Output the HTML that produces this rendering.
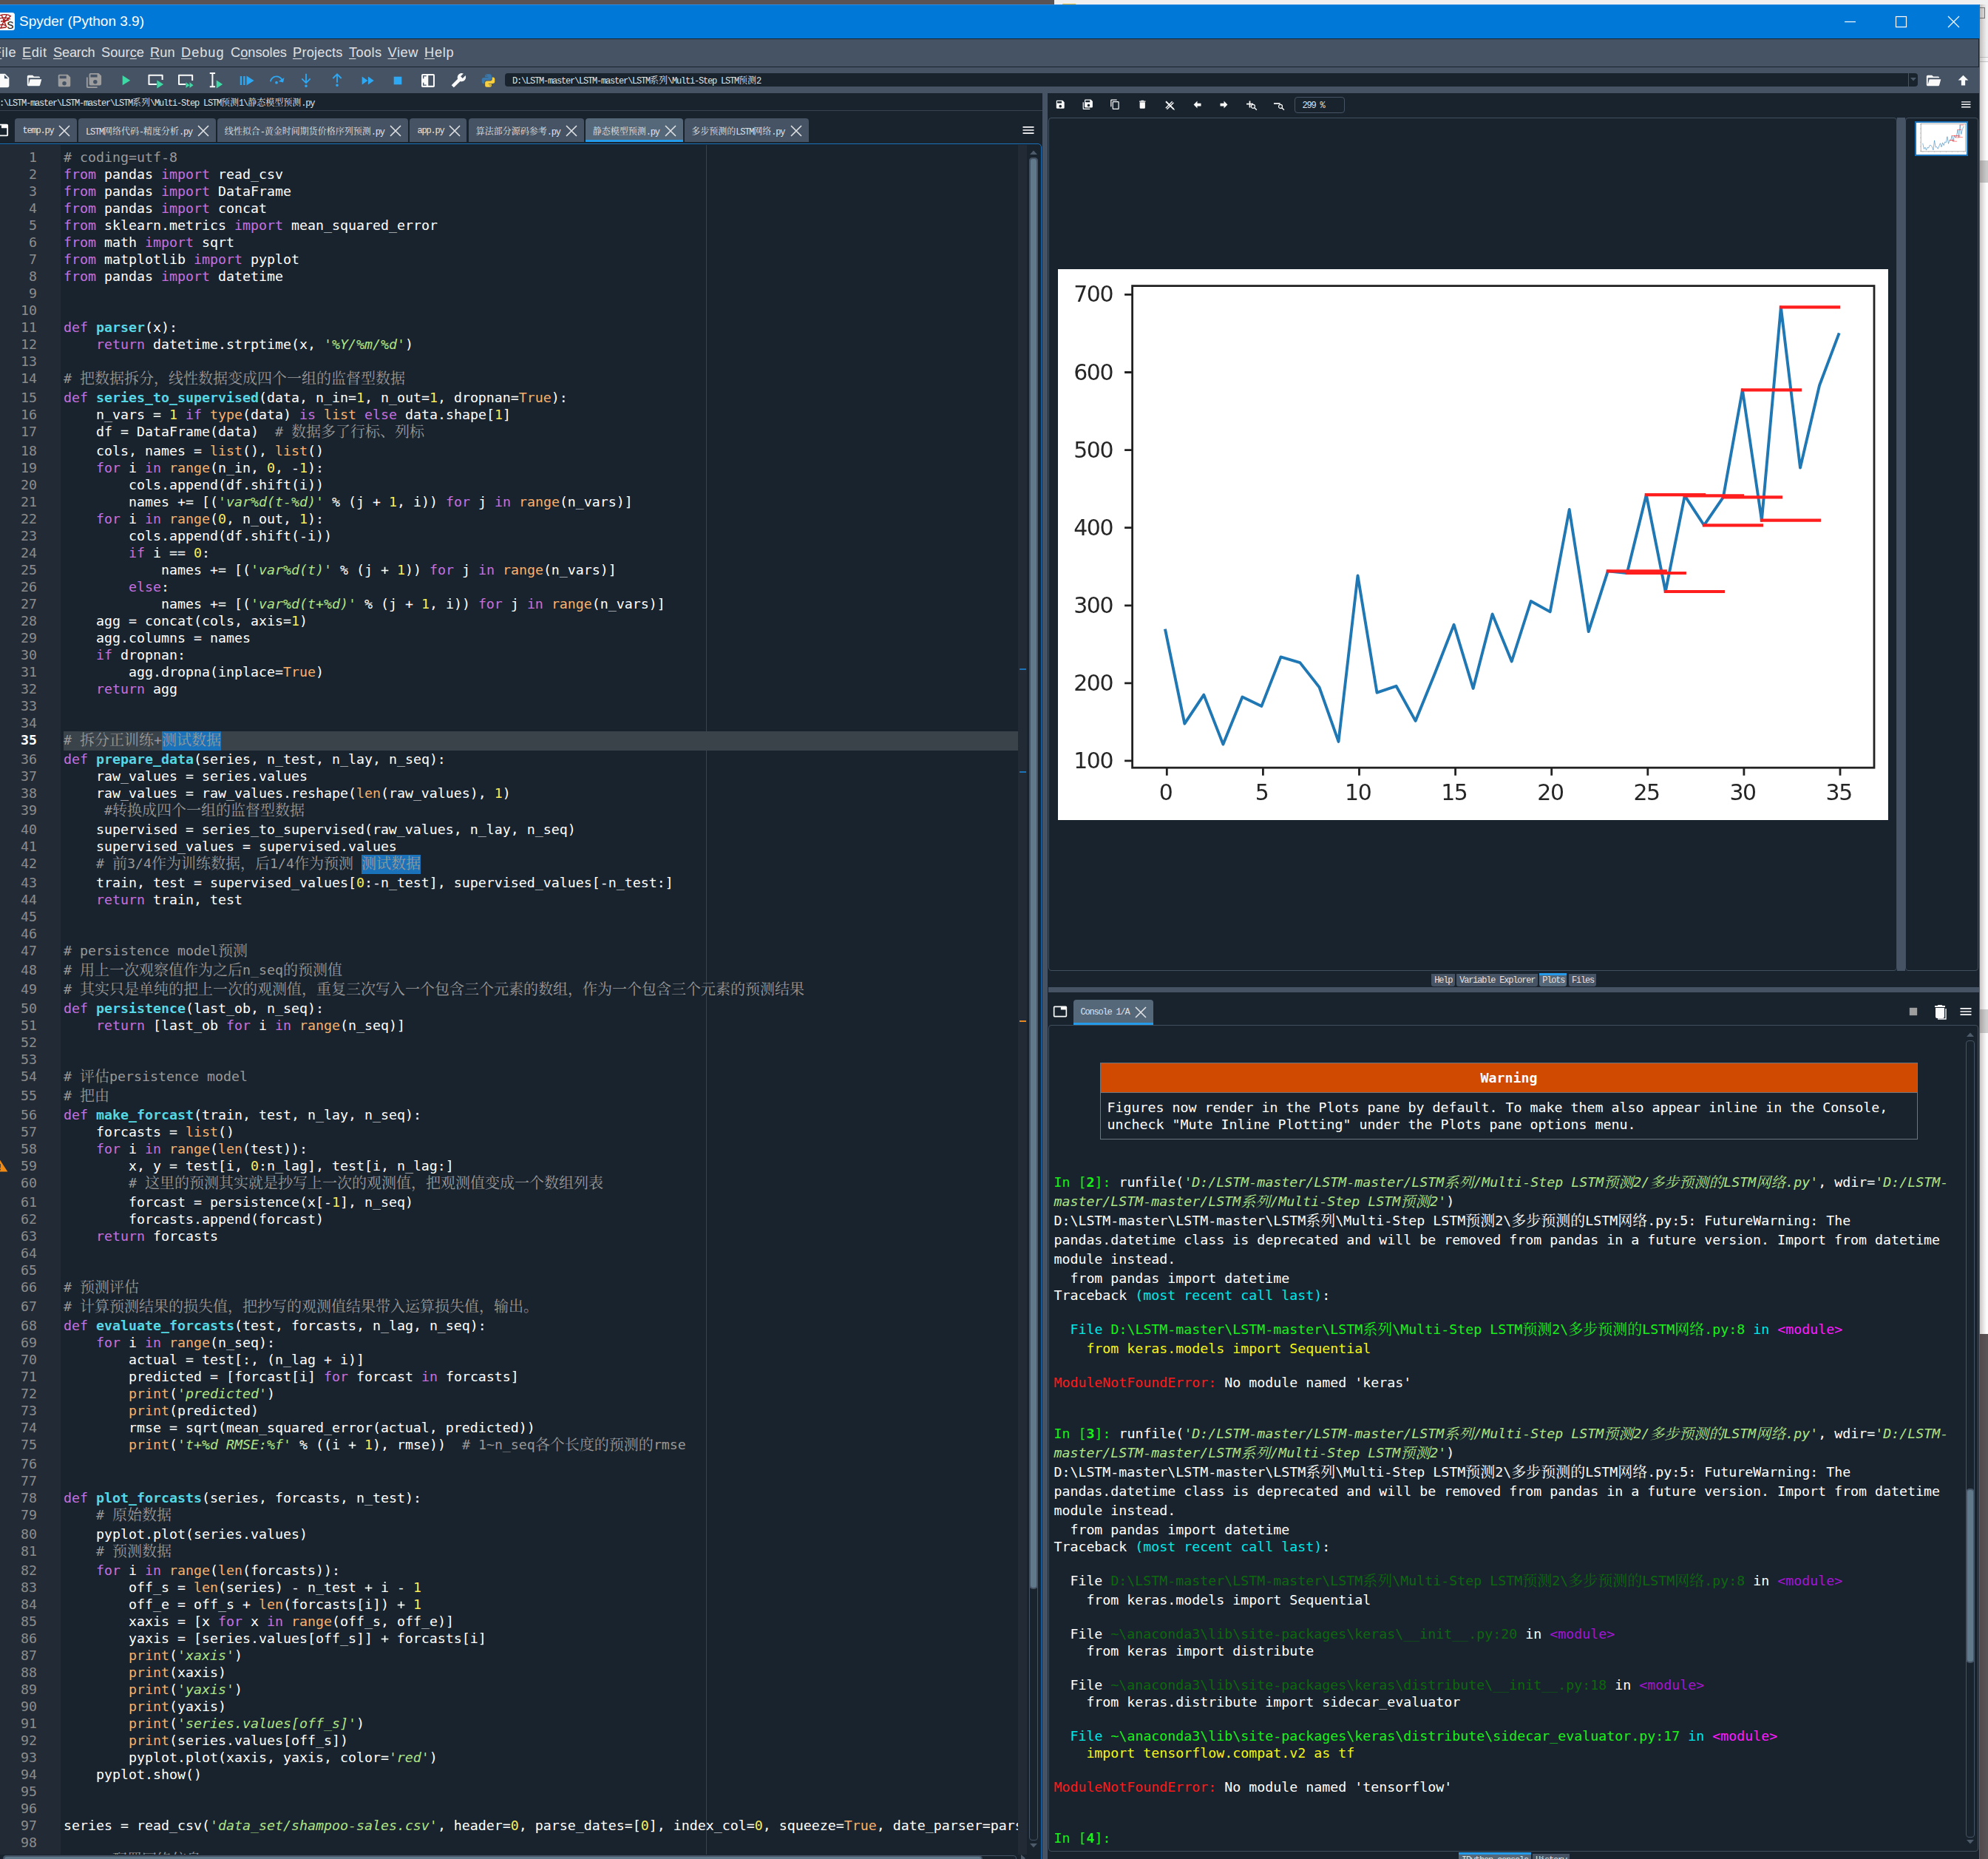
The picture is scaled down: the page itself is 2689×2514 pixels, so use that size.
<!DOCTYPE html>
<html lang="zh"><head><meta charset="utf-8"><title>Spyder (Python 3.9)</title>
<style>
html,body{margin:0;padding:0}
body{width:2689px;height:2514px;overflow:hidden;position:relative;background:#fdfdfd;
 font-family:"Liberation Sans","Noto Sans CJK SC",sans-serif;}
.abs,.ic{position:absolute}
.ic{display:block;overflow:visible}
#win{position:absolute;left:0;top:6px;width:2678px;height:2508px;background:#19232d;overflow:hidden}
#win>.o{position:absolute;left:0;top:-6px;width:2678px;height:2514px}
#title{position:absolute;left:0;top:6px;width:2678px;height:46px;background:#0078d7;box-shadow:inset 0 1px 0 #2b8ce0}
#title .t{position:absolute;left:26px;top:11px;font-size:19px;line-height:24px;color:#fff;white-space:pre}
#menubar{position:absolute;left:0;top:52px;width:2676px;height:37px;background:#455364;border-top:1px solid #19232d;border-bottom:1px solid #19232d;border-right:1px solid #19232d;box-sizing:content-box}
#menubar span{position:absolute;top:5px;font-size:18.2px;line-height:26px;color:#e0e1e3;white-space:pre}
#menubar u{text-decoration-thickness:1px;text-underline-offset:2px}
#toolbar{position:absolute;left:0;top:91px;width:2678px;height:35px;background:#455364}
.small{font-family:"Liberation Mono","Noto Serif CJK SC",monospace;font-size:12px;letter-spacing:-1.2px;line-height:14px;color:#e0e1e3;white-space:pre}
.small b{font-weight:normal;font-size:12px;letter-spacing:0;font-family:"Noto Serif CJK SC",serif}
.mono{font-family:"DejaVu Sans Mono","Noto Serif CJK SC",monospace;font-size:18.27px;white-space:pre}
.mono .z{font-family:"Noto Serif CJK SC",serif;font-size:20px;line-height:20px;position:relative;top:1px}

#code{position:absolute;left:0;top:201px;width:1377px;height:2307px;overflow:hidden;color:#fff;white-space:normal}
#code .l{position:relative;height:23px;line-height:23px;white-space:pre}
#code .l.h{height:26px}
#code .l.cur{background:linear-gradient(90deg,transparent 86px,#3a424a 86px)}
#code .ln{position:absolute;left:0;top:0;width:50px;text-align:right;color:#8c8c8c}
#code .cur .ln{color:#fff;font-weight:bold}
#code .tx{position:absolute;left:86px;top:0;white-space:pre}
.k{color:#c670e0}.b{color:#fab16c}.d{color:#57d6e4;font-weight:bold}.c{color:#999}.s{color:#b0e686;font-style:italic}.n{color:#faed5c}
.occ{background:#1a72bb;display:inline-block;height:26px;vertical-align:top}


.cl{position:absolute;left:1425.4px;height:23px;line-height:23px;color:#fff;white-space:pre}
.cg{color:#19f219}.cc{color:#00e8e8}.cm{color:#ff19ff}.cy{color:#f5f51a}.cr{color:#ff1a1a}.cdg{color:#0d680d}.cdm{color:#a314d1}
.cs{color:#b0e686;font-style:italic}

</style></head><body>
<div class="abs" style="left:0;top:0;width:1426px;height:7px;background:#5a5356"></div>
<div class="abs" style="left:1426px;top:0;width:1263px;height:7px;background:#f0f0f0"></div>
<div class="abs" style="left:1437px;top:5px;width:18px;height:2px;background:#e3b933"></div>
<div class="abs" style="left:2678px;top:6px;width:11px;height:72px;background:#f0f0f0"></div>
<div class="abs" style="left:2678px;top:77px;width:11px;height:7px;background:#f6f6f6;border-top:1px solid #c9c9c9;border-bottom:1px solid #c9c9c9;box-sizing:border-box"></div>
<div class="abs" style="left:2677px;top:10px;width:8px;height:15px;border:1px solid #7a7a7a;box-sizing:border-box;background:#e6e6e6"></div>
<div class="abs" style="left:2678px;top:217px;width:11px;height:30px;background:#c9c9c9"></div>
<div class="abs" style="left:2678px;top:1365px;width:11px;height:32px;background:#cfcfcf"></div>
<div class="abs" style="left:2678px;top:1804px;width:11px;height:710px;background:#5a5457"></div>
<div class="abs" style="left:2678px;top:6px;width:9px;height:2508px;background:linear-gradient(90deg,rgba(60,40,40,.25),rgba(60,40,40,0))"></div>
<div id="win"><div class="o">

<div id="title">
<svg class="ic" style="left:-8px;top:11px" width="28" height="24" viewBox="0 0 28 24"><rect x="0" y="0" width="28" height="24" rx="3.5" fill="#fafafa"/><g stroke="#a31515" stroke-width="1.3" fill="none"><path d="M8,4 Q16,1 23,5 M8,8 Q15,5.5 22,9 M9,12 L20,10 M8,17 Q12,15 16,18 M8,21 L16,20"/><path d="M10,3 L17,20 M17,3 L9,21 M22,5 L14,13"/></g><text x="17.6" y="21.6" font-family="Liberation Sans,sans-serif" font-size="18" fill="#2b2b2b">s</text></svg>
<div class="t">Spyder (Python 3.9)</div>
<svg class="ic" style="left:2480px;top:0" width="190" height="46" viewBox="0 0 190 46" fill="none" stroke="#fff" stroke-width="1.2"><path d="M15,23.5H30"/><rect x="84.5" y="16.5" width="14" height="14"/><path d="M155,16L170,31M170,16L155,31"/></svg>
</div>
<div id="menubar">
<span style="left:-9.3px;letter-spacing:0.50px"><u>F</u>ile</span>
<span style="left:30.0px;letter-spacing:0.53px"><u>E</u>dit</span>
<span style="left:72.0px;letter-spacing:-0.19px"><u>S</u>earch</span>
<span style="left:137.0px;letter-spacing:0.06px">Sour<u>c</u>e</span>
<span style="left:203.0px;letter-spacing:0.07px"><u>R</u>un</span>
<span style="left:245.0px;letter-spacing:0.98px"><u>D</u>ebug</span>
<span style="left:312.0px;letter-spacing:0.00px">C<u>o</u>nsoles</span>
<span style="left:396.0px;letter-spacing:0.25px"><u>P</u>rojects</span>
<span style="left:472.0px;letter-spacing:0.40px"><u>T</u>ools</span>
<span style="left:524.5px;letter-spacing:0.57px"><u>V</u>iew</span>
<span style="left:574.0px;letter-spacing:0.75px"><u>H</u>elp</span>
</div>
<div id="toolbar">
<svg class="ic" style="left:-6.5px;top:6.5px" width="22" height="22" viewBox="0 0 24 24" ><path d="M13,9V3.5L18.5,9M6,2C4.89,2 4,2.89 4,4V20A2,2 0 0,0 6,22H18A2,2 0 0,0 20,20V8L14,2H6Z" fill="#fafafa"/></svg>
<svg class="ic" style="left:35.0px;top:6.5px" width="22" height="22" viewBox="0 0 24 24" ><path d="M19,20H4C2.89,20 2,19.1 2,18V6C2,4.89 2.89,4 4,4H10L12,6H19A2,2 0 0,1 21,8H21L4,8V18L6.14,10H23.21L20.93,18.5C20.7,19.37 19.92,20 19,20Z" fill="#fafafa"/></svg>
<svg class="ic" style="left:75.5px;top:6.5px" width="22" height="22" viewBox="0 0 24 24" ><path d="M15,9H5V5H15M12,19A3,3 0 0,1 9,16A3,3 0 0,1 12,13A3,3 0 0,1 15,16A3,3 0 0,1 12,19M17,3H5C3.89,3 3,3.9 3,5V19A2,2 0 0,0 5,21H19A2,2 0 0,0 21,19V7L17,3Z" fill="#9e9e9e"/></svg>
<svg class="ic" style="left:116.0px;top:6.5px" width="22" height="22" viewBox="0 0 24 24" ><path d="M17,7V3H7V7H17M14,17A3,3 0 0,0 17,14A3,3 0 0,0 14,11A3,3 0 0,0 11,14A3,3 0 0,0 14,17M19,1L23,5V17A2,2 0 0,1 21,19H7C5.89,19 5,18.1 5,17V3A2,2 0 0,1 7,1H19M1,7H3V21H17V23H3A2,2 0 0,1 1,21V7Z" fill="#9e9e9e"/></svg>
<svg class="ic" style="left:158.0px;top:6.0px" width="23" height="23" viewBox="0 0 24 24" ><path d="M8,5.14V19.14L19,12.14L8,5.14Z" fill="#3ed9a4"/></svg>
<svg class="ic" style="left:199.5px;top:6.5px" width="22" height="22" viewBox="0 0 24 24" ><path d="M13,17.5H1.6V4.2H21.4V11" fill="none" stroke="#fafafa" stroke-width="2.2" stroke-linejoin="round"/><path d="M13.5,11.5V23.5L23,17.5Z" fill="#3ed9a4"/></svg>
<svg class="ic" style="left:240.0px;top:6.5px" width="22" height="22" viewBox="0 0 24 24" ><path d="M12,17.5H2.2V4.2H22V12" fill="none" stroke="#fafafa" stroke-width="2.2" stroke-linejoin="round"/><path d="M12.5,14.5V23L18,18.75ZM18,14.5V23L23.5,18.75Z" fill="#3ed9a4"/></svg>
<svg class="ic" style="left:281.0px;top:6.5px" width="22" height="22" viewBox="0 0 24 24" ><path d="M3,1.2H11M3,21H11M7,1.2V21" fill="none" stroke="#fafafa" stroke-width="2.2"/><path d="M12.8,11.5V23.5L22,17.5Z" fill="#3ed9a4"/></svg>
<svg class="ic" style="left:321.5px;top:6.5px" width="22" height="22" viewBox="0 0 24 24" ><path d="M3,5.5H5.6V18.5H3ZM7.8,5.5H10.4V18.5H7.8ZM12.5,5V19L23.5,12Z" fill="#2fa8f4"/></svg>
<svg class="ic" style="left:363.0px;top:6.0px" width="22" height="22" viewBox="0 0 24 24" ><path d="M12,14A2,2 0 0,1 14,16A2,2 0 0,1 12,18A2,2 0 0,1 10,16A2,2 0 0,1 12,14M23.46,8.86L21.87,15.75L15,14.16L18.8,11.78C17.39,9.5 14.87,8 12,8C8.05,8 4.77,10.86 4.12,14.63L2.15,14.28C2.96,9.58 7.06,6 12,6C15.58,6 18.73,7.89 20.5,10.72L23.46,8.86Z" fill="#2fa8f4"/></svg>
<svg class="ic" style="left:403.3px;top:6.5px" width="22" height="22" viewBox="0 0 24 24" ><path d="M12,22A2,2 0 0,1 10,20A2,2 0 0,1 12,18A2,2 0 0,1 14,20A2,2 0 0,1 12,22M13,2V13L17.5,8.5L18.92,9.92L12,16.84L5.08,9.92L6.5,8.5L11,13V2H13Z" fill="#2fa8f4"/></svg>
<svg class="ic" style="left:444.6px;top:6.2px" width="22" height="22" viewBox="0 0 24 24" ><path d="M12,22A2,2 0 0,1 10,20A2,2 0 0,1 12,18A2,2 0 0,1 14,20A2,2 0 0,1 12,22M13,16H11V6L6.5,10.5L5.08,9.08L12,2.16L18.92,9.08L17.5,10.5L13,6V16Z" fill="#2fa8f4"/></svg>
<svg class="ic" style="left:485.5px;top:6.5px" width="22" height="22" viewBox="0 0 24 24" ><path d="M13,6V18L21.5,12M4,18L12.5,12L4,6V18Z" fill="#2fa8f4"/></svg>
<svg class="ic" style="left:526.5px;top:6.5px" width="22" height="22" viewBox="0 0 24 24" ><path d="M6.2,6.2H17.8V17.8H6.2Z" fill="#2fa8f4"/></svg>
<svg class="ic" style="left:568.0px;top:6.5px" width="22" height="22" viewBox="0 0 24 24" ><rect x="2.2" y="2.2" width="19.6" height="19.6" rx="2" fill="#fafafa"/><path d="M12.3,4.4H19.6V19.4H12.3Z" fill="#455364"/><path d="M9.4,5.1H5.1V8.9M5.1,14.9V18.7H9.4" fill="none" stroke="#455364" stroke-width="1.5"/></svg>
<svg class="ic" style="left:609.5px;top:7.0px" width="21" height="21" viewBox="0 0 24 24" ><g transform="translate(24,0) scale(-1,1)"><path d="M22.7,19L13.6,9.9C14.5,7.6 14,4.9 12.1,3C10.1,1 7.1,0.6 4.7,1.7L9,6L6,9L1.6,4.7C0.4,7.1 0.9,10.1 2.9,12.1C4.8,14 7.5,14.5 9.8,13.6L18.9,22.7C19.3,23.1 19.9,23.1 20.3,22.7L22.6,20.4C23.1,20 23.1,19.3 22.7,19Z" fill="#fafafa"/></g></svg>
<svg class="ic" style="left:650.0px;top:7.3px" width="21" height="21" viewBox="0 0 24 24" ><path d="M4.86,17.5C3.28,17.5 2,16.22 2,14.64V10.86C2,9.28 3.28,8 4.86,8H12C12,7.61 11.68,7.04 11.29,7.04H7V5.36C7,3.78 8.28,2.5 9.86,2.5H14.14C15.72,2.5 17,3.78 17,5.36V9.11C17,10.69 15.72,11.96 14.14,11.96H8.89C7.31,11.96 6.04,13.24 6.04,14.82V17.5H4.86M9.14,5.71C9.54,5.71 9.86,5.41 9.86,4.82C9.86,4.23 9.54,4.11 9.14,4.11C8.75,4.11 8.43,4.43 8.43,4.82C8.43,5.21 8.75,5.71 9.14,5.71Z" fill="#3b79ad"/><path d="M19.14,7.5A2.86,2.86 0 0,1 22,10.36V14.14A2.86,2.86 0 0,1 19.14,17H12C12,17.39 12.32,17.96 12.71,17.96H17V19.64A2.86,2.86 0 0,1 14.14,22.5H9.86A2.86,2.86 0 0,1 7,19.64V15.89C7,14.31 8.28,13.04 9.86,13.04H15.11C16.69,13.04 17.96,11.76 17.96,10.18V7.5H19.14M14.86,19.29C14.46,19.29 14.14,19.59 14.14,20.18C14.14,20.77 14.46,20.89 14.86,20.89A0.71,0.71 0 0,0 15.57,20.18C15.57,19.79 15.25,19.29 14.86,19.29Z" fill="#f8cf3e"/></svg>
<div class="abs" style="left:683px;top:8px;width:1911px;height:18px;background:#19232d;border-radius:4px"></div>
<div class="abs" style="left:2581px;top:8px;width:1px;height:18px;background:#455364"></div>
<svg class="ic" style="left:2584px;top:14px" width="8" height="5" viewBox="0 0 8 5"><path d="M0,0H8L4,4.5Z" fill="#4b5a6a"/></svg>
<div class="abs small" style="left:693px;top:9.5px">D:\LSTM-master\LSTM-master\LSTM<b>系列</b>\Multi-Step LSTM<b>预测</b>2</div>
<svg class="ic" style="left:2604.0px;top:6.5px" width="22" height="22" viewBox="0 0 24 24" ><path d="M19,20H4C2.89,20 2,19.1 2,18V6C2,4.89 2.89,4 4,4H10L12,6H19A2,2 0 0,1 21,8H21L4,8V18L6.14,10H23.21L20.93,18.5C20.7,19.37 19.92,20 19,20Z" fill="#fafafa"/></svg>
<svg class="ic" style="left:2645.1px;top:6.8px" width="21" height="21" viewBox="0 0 24 24" ><path d="M15,20H9V12H4.16L12,4.16L19.84,12H15V20Z" fill="#fafafa"/></svg>
</div>
<div class="abs small" style="left:-1px;top:130.5px">:\LSTM-master\LSTM-master\LSTM<b>系列</b>\Multi-Step LSTM<b>预测</b>1\<b>静态模型预测</b>.py</div>
<div class="abs" style="left:0;top:149px;width:1410px;height:1px;background:#37414f"></div>
<svg class="ic" style="left:-10.5px;top:165.0px" width="22" height="22" viewBox="0 0 24 24" ><path d="M21,3H3A2,2 0 0,0 1,5V19A2,2 0 0,0 3,21H21A2,2 0 0,0 23,19V5A2,2 0 0,0 21,3M21,19H3V5H13V9H21V19Z" fill="#fafafa"/></svg>
<div class="abs" style="left:20.3px;top:160px;width:83.4px;height:32px;background:#455364;border-radius:4px 4px 0 0"></div>
<div class="abs small" style="left:30.4px;top:169.5px">temp.py</div>
<svg class="ic" style="left:79.3px;top:168.8px" width="16" height="16" viewBox="-8 -8 16 16"><path d="M-7,-7L7,7M7,-7L-7,7" stroke="#e0e1e3" stroke-width="1.6" fill="none"/></svg>
<div class="abs" style="left:106.0px;top:160px;width:185.5px;height:32px;background:#455364;border-radius:4px 4px 0 0"></div>
<div class="abs small" style="left:116.0px;top:169.5px">LSTM<b>网络代码</b>-<b>精度分析</b>.py</div>
<svg class="ic" style="left:267.0px;top:168.8px" width="16" height="16" viewBox="-8 -8 16 16"><path d="M-7,-7L7,7M7,-7L-7,7" stroke="#e0e1e3" stroke-width="1.6" fill="none"/></svg>
<div class="abs" style="left:294.0px;top:160px;width:257.5px;height:32px;background:#455364;border-radius:4px 4px 0 0"></div>
<div class="abs small" style="left:303.7px;top:169.5px"><b>线性拟合</b>-<b>黄金时间期货价格序列预测</b>.py</div>
<svg class="ic" style="left:526.6px;top:168.8px" width="16" height="16" viewBox="-8 -8 16 16"><path d="M-7,-7L7,7M7,-7L-7,7" stroke="#e0e1e3" stroke-width="1.6" fill="none"/></svg>
<div class="abs" style="left:554.0px;top:160px;width:77.3px;height:32px;background:#455364;border-radius:4px 4px 0 0"></div>
<div class="abs small" style="left:564.4px;top:169.5px">app.py</div>
<svg class="ic" style="left:607.0px;top:168.8px" width="16" height="16" viewBox="-8 -8 16 16"><path d="M-7,-7L7,7M7,-7L-7,7" stroke="#e0e1e3" stroke-width="1.6" fill="none"/></svg>
<div class="abs" style="left:633.8px;top:160px;width:156.2px;height:32px;background:#455364;border-radius:4px 4px 0 0"></div>
<div class="abs small" style="left:643.7px;top:169.5px"><b>算法部分源码参考</b>.py</div>
<svg class="ic" style="left:765.0px;top:168.8px" width="16" height="16" viewBox="-8 -8 16 16"><path d="M-7,-7L7,7M7,-7L-7,7" stroke="#e0e1e3" stroke-width="1.6" fill="none"/></svg>
<div class="abs" style="left:792.0px;top:160px;width:132.0px;height:32px;background:#54687a;border-radius:4px 4px 0 0"></div>
<div class="abs" style="left:792.0px;top:189px;width:132.0px;height:3px;background:#259ae9"></div>
<div class="abs small" style="left:801.7px;top:169.5px"><b>静态模型预测</b>.py</div>
<svg class="ic" style="left:898.7px;top:168.8px" width="16" height="16" viewBox="-8 -8 16 16"><path d="M-7,-7L7,7M7,-7L-7,7" stroke="#e0e1e3" stroke-width="1.6" fill="none"/></svg>
<div class="abs" style="left:926.0px;top:160px;width:168.0px;height:32px;background:#455364;border-radius:4px 4px 0 0"></div>
<div class="abs small" style="left:935.3px;top:169.5px"><b>多步预测的</b>LSTM<b>网络</b>.py</div>
<svg class="ic" style="left:1069.0px;top:168.8px" width="16" height="16" viewBox="-8 -8 16 16"><path d="M-7,-7L7,7M7,-7L-7,7" stroke="#e0e1e3" stroke-width="1.6" fill="none"/></svg>
<svg class="ic" style="left:1381.0px;top:166.0px" width="20" height="20" viewBox="0 0 24 24" ><path d="M3,6H21V8H3V6M3,11H21V13H3V11M3,16H21V18H3V16Z" fill="#fafafa"/></svg>
<div class="abs" style="left:-6px;top:194px;width:1415px;height:2330px;border:1px solid #1a72bb;border-radius:5px;box-sizing:border-box"></div>
<div class="abs" style="left:0;top:196px;width:82px;height:2312px;background:#222b35"></div>
<div class="abs" style="left:1377px;top:196px;width:12px;height:2312px;background:#222b35"></div>
<div class="abs" style="left:1379px;top:904px;width:9px;height:2px;background:#1a72bb"></div>
<div class="abs" style="left:1379px;top:1043px;width:9px;height:2px;background:#1a72bb"></div>
<div class="abs" style="left:1379px;top:1380px;width:9px;height:2px;background:#e8871e"></div>
<svg class="ic" style="left:1393px;top:203px" width="10" height="6" viewBox="0 0 10 6"><path d="M0,6L5,0.5L10,6Z" fill="#4d5b6a"/></svg>
<div class="abs" style="left:1392px;top:213px;width:12px;height:2276px;border:1px solid #455364;border-radius:4px;box-sizing:border-box"></div>
<div class="abs" style="left:1392px;top:213px;width:12px;height:1936px;background:#60798b;border:2px solid #455364;border-radius:5px;box-sizing:border-box"></div>
<svg class="ic" style="left:1393px;top:2493px" width="10" height="6" viewBox="0 0 10 6"><path d="M0,0L5,5.5L10,0Z" fill="#4d5b6a"/></svg>
<div class="abs" style="left:955px;top:196px;width:1px;height:2312px;background:#37414f"></div>

<div id="code" class="mono">
<div class="l"><span class="ln">1</span><span class="tx"><span class="c"># coding=utf-8</span></span></div>
<div class="l"><span class="ln">2</span><span class="tx"><span class="k">from</span> pandas <span class="k">import</span> read_csv</span></div>
<div class="l"><span class="ln">3</span><span class="tx"><span class="k">from</span> pandas <span class="k">import</span> DataFrame</span></div>
<div class="l"><span class="ln">4</span><span class="tx"><span class="k">from</span> pandas <span class="k">import</span> concat</span></div>
<div class="l"><span class="ln">5</span><span class="tx"><span class="k">from</span> sklearn.metrics <span class="k">import</span> mean_squared_error</span></div>
<div class="l"><span class="ln">6</span><span class="tx"><span class="k">from</span> math <span class="k">import</span> sqrt</span></div>
<div class="l"><span class="ln">7</span><span class="tx"><span class="k">from</span> matplotlib <span class="k">import</span> pyplot</span></div>
<div class="l"><span class="ln">8</span><span class="tx"><span class="k">from</span> pandas <span class="k">import</span> datetime</span></div>
<div class="l"><span class="ln">9</span><span class="tx"></span></div>
<div class="l"><span class="ln">10</span><span class="tx"></span></div>
<div class="l"><span class="ln">11</span><span class="tx"><span class="k">def</span> <span class="d">parser</span>(x):</span></div>
<div class="l"><span class="ln">12</span><span class="tx">    <span class="k">return</span> datetime.strptime(x, <span class="s">'%Y/%m/%d'</span>)</span></div>
<div class="l"><span class="ln">13</span><span class="tx"></span></div>
<div class="l h"><span class="ln">14</span><span class="tx"><span class="c"># <span class="z">把数据拆分，线性数据变成四个一组的监督型数据</span></span></span></div>
<div class="l"><span class="ln">15</span><span class="tx"><span class="k">def</span> <span class="d">series_to_supervised</span>(data, n_in=<span class="n">1</span>, n_out=<span class="n">1</span>, dropnan=<span class="b">True</span>):</span></div>
<div class="l"><span class="ln">16</span><span class="tx">    n_vars = <span class="n">1</span> <span class="k">if</span> <span class="b">type</span>(data) <span class="k">is</span> <span class="b">list</span> <span class="k">else</span> data.shape[<span class="n">1</span>]</span></div>
<div class="l h"><span class="ln">17</span><span class="tx">    df = DataFrame(data)  <span class="c"># <span class="z">数据多了行标、列标</span></span></span></div>
<div class="l"><span class="ln">18</span><span class="tx">    cols, names = <span class="b">list</span>(), <span class="b">list</span>()</span></div>
<div class="l"><span class="ln">19</span><span class="tx">    <span class="k">for</span> i <span class="k">in</span> <span class="b">range</span>(n_in, <span class="n">0</span>, -<span class="n">1</span>):</span></div>
<div class="l"><span class="ln">20</span><span class="tx">        cols.append(df.shift(i))</span></div>
<div class="l"><span class="ln">21</span><span class="tx">        names += [(<span class="s">'var%d(t-%d)'</span> % (j + <span class="n">1</span>, i)) <span class="k">for</span> j <span class="k">in</span> <span class="b">range</span>(n_vars)]</span></div>
<div class="l"><span class="ln">22</span><span class="tx">    <span class="k">for</span> i <span class="k">in</span> <span class="b">range</span>(<span class="n">0</span>, n_out, <span class="n">1</span>):</span></div>
<div class="l"><span class="ln">23</span><span class="tx">        cols.append(df.shift(-i))</span></div>
<div class="l"><span class="ln">24</span><span class="tx">        <span class="k">if</span> i == <span class="n">0</span>:</span></div>
<div class="l"><span class="ln">25</span><span class="tx">            names += [(<span class="s">'var%d(t)'</span> % (j + <span class="n">1</span>)) <span class="k">for</span> j <span class="k">in</span> <span class="b">range</span>(n_vars)]</span></div>
<div class="l"><span class="ln">26</span><span class="tx">        <span class="k">else</span>:</span></div>
<div class="l"><span class="ln">27</span><span class="tx">            names += [(<span class="s">'var%d(t+%d)'</span> % (j + <span class="n">1</span>, i)) <span class="k">for</span> j <span class="k">in</span> <span class="b">range</span>(n_vars)]</span></div>
<div class="l"><span class="ln">28</span><span class="tx">    agg = concat(cols, axis=<span class="n">1</span>)</span></div>
<div class="l"><span class="ln">29</span><span class="tx">    agg.columns = names</span></div>
<div class="l"><span class="ln">30</span><span class="tx">    <span class="k">if</span> dropnan:</span></div>
<div class="l"><span class="ln">31</span><span class="tx">        agg.dropna(inplace=<span class="b">True</span>)</span></div>
<div class="l"><span class="ln">32</span><span class="tx">    <span class="k">return</span> agg</span></div>
<div class="l"><span class="ln">33</span><span class="tx"></span></div>
<div class="l"><span class="ln">34</span><span class="tx"></span></div>
<div class="l h cur"><span class="ln">35</span><span class="tx"><span class="c"># <span class="z">拆分正训练</span>+<span class="occ"><span class="z">测试数据</span></span></span></span></div>
<div class="l"><span class="ln">36</span><span class="tx"><span class="k">def</span> <span class="d">prepare_data</span>(series, n_test, n_lay, n_seq):</span></div>
<div class="l"><span class="ln">37</span><span class="tx">    raw_values = series.values</span></div>
<div class="l"><span class="ln">38</span><span class="tx">    raw_values = raw_values.reshape(<span class="b">len</span>(raw_values), <span class="n">1</span>)</span></div>
<div class="l h"><span class="ln">39</span><span class="tx">     <span class="c">#<span class="z">转换成四个一组的监督型数据</span></span></span></div>
<div class="l"><span class="ln">40</span><span class="tx">    supervised = series_to_supervised(raw_values, n_lay, n_seq)</span></div>
<div class="l"><span class="ln">41</span><span class="tx">    supervised_values = supervised.values</span></div>
<div class="l h"><span class="ln">42</span><span class="tx">    <span class="c"># <span class="z">前</span>3/4<span class="z">作为训练数据，后</span>1/4<span class="z">作为预测</span> <span class="occ"><span class="z">测试数据</span></span></span></span></div>
<div class="l"><span class="ln">43</span><span class="tx">    train, test = supervised_values[<span class="n">0</span>:-n_test], supervised_values[-n_test:]</span></div>
<div class="l"><span class="ln">44</span><span class="tx">    <span class="k">return</span> train, test</span></div>
<div class="l"><span class="ln">45</span><span class="tx"></span></div>
<div class="l"><span class="ln">46</span><span class="tx"></span></div>
<div class="l h"><span class="ln">47</span><span class="tx"><span class="c"># persistence model<span class="z">预测</span></span></span></div>
<div class="l h"><span class="ln">48</span><span class="tx"><span class="c"># <span class="z">用上一次观察值作为之后</span>n_seq<span class="z">的预测值</span></span></span></div>
<div class="l h"><span class="ln">49</span><span class="tx"><span class="c"># <span class="z">其实只是单纯的把上一次的观测值，重复三次写入一个包含三个元素的数组，作为一个包含三个元素的预测结果</span></span></span></div>
<div class="l"><span class="ln">50</span><span class="tx"><span class="k">def</span> <span class="d">persistence</span>(last_ob, n_seq):</span></div>
<div class="l"><span class="ln">51</span><span class="tx">    <span class="k">return</span> [last_ob <span class="k">for</span> i <span class="k">in</span> <span class="b">range</span>(n_seq)]</span></div>
<div class="l"><span class="ln">52</span><span class="tx"></span></div>
<div class="l"><span class="ln">53</span><span class="tx"></span></div>
<div class="l h"><span class="ln">54</span><span class="tx"><span class="c"># <span class="z">评估</span>persistence model</span></span></div>
<div class="l h"><span class="ln">55</span><span class="tx"><span class="c"># <span class="z">把由</span></span></span></div>
<div class="l"><span class="ln">56</span><span class="tx"><span class="k">def</span> <span class="d">make_forcast</span>(train, test, n_lay, n_seq):</span></div>
<div class="l"><span class="ln">57</span><span class="tx">    forcasts = <span class="b">list</span>()</span></div>
<div class="l"><span class="ln">58</span><span class="tx">    <span class="k">for</span> i <span class="k">in</span> <span class="b">range</span>(<span class="b">len</span>(test)):</span></div>
<div class="l"><span class="ln">59</span><span class="tx">        x, y = test[i, <span class="n">0</span>:n_lag], test[i, n_lag:]</span></div>
<div class="l h"><span class="ln">60</span><span class="tx">        <span class="c"># <span class="z">这里的预测其实就是抄写上一次的观测值，把观测值变成一个数组列表</span></span></span></div>
<div class="l"><span class="ln">61</span><span class="tx">        forcast = persistence(x[-<span class="n">1</span>], n_seq)</span></div>
<div class="l"><span class="ln">62</span><span class="tx">        forcasts.append(forcast)</span></div>
<div class="l"><span class="ln">63</span><span class="tx">    <span class="k">return</span> forcasts</span></div>
<div class="l"><span class="ln">64</span><span class="tx"></span></div>
<div class="l"><span class="ln">65</span><span class="tx"></span></div>
<div class="l h"><span class="ln">66</span><span class="tx"><span class="c"># <span class="z">预测评估</span></span></span></div>
<div class="l h"><span class="ln">67</span><span class="tx"><span class="c"># <span class="z">计算预测结果的损失值，把抄写的观测值结果带入运算损失值，输出。</span></span></span></div>
<div class="l"><span class="ln">68</span><span class="tx"><span class="k">def</span> <span class="d">evaluate_forcasts</span>(test, forcasts, n_lag, n_seq):</span></div>
<div class="l"><span class="ln">69</span><span class="tx">    <span class="k">for</span> i <span class="k">in</span> <span class="b">range</span>(n_seq):</span></div>
<div class="l"><span class="ln">70</span><span class="tx">        actual = test[:, (n_lag + i)]</span></div>
<div class="l"><span class="ln">71</span><span class="tx">        predicted = [forcast[i] <span class="k">for</span> forcast <span class="k">in</span> forcasts]</span></div>
<div class="l"><span class="ln">72</span><span class="tx">        <span class="b">print</span>(<span class="s">'predicted'</span>)</span></div>
<div class="l"><span class="ln">73</span><span class="tx">        <span class="b">print</span>(predicted)</span></div>
<div class="l"><span class="ln">74</span><span class="tx">        rmse = sqrt(mean_squared_error(actual, predicted))</span></div>
<div class="l h"><span class="ln">75</span><span class="tx">        <span class="b">print</span>(<span class="s">'t+%d RMSE:%f'</span> % ((i + <span class="n">1</span>), rmse))  <span class="c"># 1~n_seq<span class="z">各个长度的预测的</span>rmse</span></span></div>
<div class="l"><span class="ln">76</span><span class="tx"></span></div>
<div class="l"><span class="ln">77</span><span class="tx"></span></div>
<div class="l"><span class="ln">78</span><span class="tx"><span class="k">def</span> <span class="d">plot_forcasts</span>(series, forcasts, n_test):</span></div>
<div class="l h"><span class="ln">79</span><span class="tx">    <span class="c"># <span class="z">原始数据</span></span></span></div>
<div class="l"><span class="ln">80</span><span class="tx">    pyplot.plot(series.values)</span></div>
<div class="l h"><span class="ln">81</span><span class="tx">    <span class="c"># <span class="z">预测数据</span></span></span></div>
<div class="l"><span class="ln">82</span><span class="tx">    <span class="k">for</span> i <span class="k">in</span> <span class="b">range</span>(<span class="b">len</span>(forcasts)):</span></div>
<div class="l"><span class="ln">83</span><span class="tx">        off_s = <span class="b">len</span>(series) - n_test + i - <span class="n">1</span></span></div>
<div class="l"><span class="ln">84</span><span class="tx">        off_e = off_s + <span class="b">len</span>(forcasts[i]) + <span class="n">1</span></span></div>
<div class="l"><span class="ln">85</span><span class="tx">        xaxis = [x <span class="k">for</span> x <span class="k">in</span> <span class="b">range</span>(off_s, off_e)]</span></div>
<div class="l"><span class="ln">86</span><span class="tx">        yaxis = [series.values[off_s]] + forcasts[i]</span></div>
<div class="l"><span class="ln">87</span><span class="tx">        <span class="b">print</span>(<span class="s">'xaxis'</span>)</span></div>
<div class="l"><span class="ln">88</span><span class="tx">        <span class="b">print</span>(xaxis)</span></div>
<div class="l"><span class="ln">89</span><span class="tx">        <span class="b">print</span>(<span class="s">'yaxis'</span>)</span></div>
<div class="l"><span class="ln">90</span><span class="tx">        <span class="b">print</span>(yaxis)</span></div>
<div class="l"><span class="ln">91</span><span class="tx">        <span class="b">print</span>(<span class="s">'series.values[off_s]'</span>)</span></div>
<div class="l"><span class="ln">92</span><span class="tx">        <span class="b">print</span>(series.values[off_s])</span></div>
<div class="l"><span class="ln">93</span><span class="tx">        pyplot.plot(xaxis, yaxis, color=<span class="s">'red'</span>)</span></div>
<div class="l"><span class="ln">94</span><span class="tx">    pyplot.show()</span></div>
<div class="l"><span class="ln">95</span><span class="tx"></span></div>
<div class="l"><span class="ln">96</span><span class="tx"></span></div>
<div class="l"><span class="ln">97</span><span class="tx">series = read_csv(<span class="s">'data_set/shampoo-sales.csv'</span>, header=<span class="n">0</span>, parse_dates=[<span class="n">0</span>], index_col=<span class="n">0</span>, squeeze=<span class="b">True</span>, date_parser=parser)</span></div>
<div class="l"><span class="ln">98</span><span class="tx"></span></div>
<div class="l h"><span class="ln">99</span><span class="tx">    <span class="c"># <span class="z">配置网络信息</span></span></span></div>
<div class="l"><span class="ln">100</span><span class="tx"></span></div>
</div>
<svg class="ic" style="left:-11px;top:1567.5px" width="22" height="17" viewBox="0 0 22 17"><path d="M10.7,0.3L21.3,16.5H0Z" fill="#f08a14"/><path d="M9.7,6H11.7V11.3H9.7ZM9.7,12.8H11.7V14.6H9.7Z" fill="#19232d"/></svg>
<div class="abs" style="left:0;top:2508px;width:1390px;height:8px;background:#19232d"></div>
<div class="abs" style="left:4px;top:2509px;width:1371px;height:12px;border:1px solid #455364;border-radius:4px;box-sizing:border-box"></div>
<div class="abs" style="left:4px;top:2509px;width:1325px;height:12px;background:#60798b;border:2px solid #455364;border-radius:5px;box-sizing:border-box"></div>
<svg class="ic" style="left:1381px;top:2508px" width="6" height="8" viewBox="0 0 6 8"><path d="M0,0L6,5L0,10Z" fill="#4d5b6a"/></svg>
<div class="abs" style="left:1410px;top:126px;width:7px;height:2388px;background:#455364"></div>
<svg class="ic" style="left:1426.8px;top:134.4px" width="14.5" height="14.5" viewBox="0 0 24 24" ><path d="M15,9H5V5H15M12,19A3,3 0 0,1 9,16A3,3 0 0,1 12,13A3,3 0 0,1 15,16A3,3 0 0,1 12,19M17,3H5C3.89,3 3,3.9 3,5V19A2,2 0 0,0 5,21H19A2,2 0 0,0 21,19V7L17,3Z" fill="#fafafa"/></svg>
<svg class="ic" style="left:1463.8px;top:134.4px" width="14.5" height="14.5" viewBox="0 0 24 24" ><path d="M17,7V3H7V7H17M14,17A3,3 0 0,0 17,14A3,3 0 0,0 14,11A3,3 0 0,0 11,14A3,3 0 0,0 14,17M19,1L23,5V17A2,2 0 0,1 21,19H7C5.89,19 5,18.1 5,17V3A2,2 0 0,1 7,1H19M1,7H3V21H17V23H3A2,2 0 0,1 1,21V7Z" fill="#fafafa"/></svg>
<svg class="ic" style="left:1500.8px;top:134.4px" width="14.5" height="14.5" viewBox="0 0 24 24" ><path d="M19,21H8V7H19M19,5H8A2,2 0 0,0 6,7V21A2,2 0 0,0 8,23H19A2,2 0 0,0 21,21V7A2,2 0 0,0 19,5M16,1H4A2,2 0 0,0 2,3V17H4V3H16V1Z" fill="#fafafa"/></svg>
<svg class="ic" style="left:1537.8px;top:134.4px" width="14.5" height="14.5" viewBox="0 0 24 24" ><path d="M19,4H15.5L14.5,3H9.5L8.5,4H5V6H19M6,19A2,2 0 0,0 8,21H16A2,2 0 0,0 18,19V7H6V19Z" fill="#fafafa"/></svg>
<svg class="ic" style="left:1575px;top:135px" width="15" height="15" viewBox="0 0 15 15" fill="none" stroke="#fafafa"><path d="M2,2.3L12.6,12.6" stroke-width="1.9"/><path d="M1.8,11.2L10.6,2.2M3.4,12.8L12.4,3.8" stroke-width="1.3"/><path d="M11.8,11.8L13.6,13.6" stroke-width="1.2"/></svg>
<svg class="ic" style="left:1611.7px;top:134.3px" width="15" height="15" viewBox="0 0 24 24" ><path d="M20,9V15H12V19.84L4.16,12L12,4.16V9H20Z" fill="#fafafa"/></svg>
<svg class="ic" style="left:1647.8px;top:134.3px" width="15" height="15" viewBox="0 0 24 24" ><path d="M4,15V9H12V4.16L19.84,12L12,19.84V15H4Z" fill="#fafafa"/></svg>
<svg class="ic" style="left:1684px;top:135px" width="18" height="16" viewBox="0 0 18 16" fill="none" stroke="#fafafa"><path d="M2,5.6H11M6.5,1.6V10.4" stroke-width="1.7"/><circle cx="10.9" cy="8.8" r="2.5" stroke-width="1.2"/><path d="M12.8,10.7L15.8,13.7" stroke-width="1.4"/></svg>
<svg class="ic" style="left:1721px;top:135px" width="18" height="16" viewBox="0 0 18 16" fill="none" stroke="#fafafa"><path d="M2,5.0H10.6" stroke-width="1.7"/><circle cx="11" cy="8.9" r="2.5" stroke-width="1.2"/><path d="M12.9,10.8L15.9,13.8" stroke-width="1.4"/></svg>
<div class="abs" style="left:1751px;top:131px;width:68px;height:22px;border:1px solid #455364;border-radius:4px;box-sizing:border-box"></div>
<div class="abs small" style="left:1761.5px;top:136px;color:#dfe1e2">299 %</div>
<svg class="ic" style="left:2650.8px;top:133.4px" width="16.5" height="16.5" viewBox="0 0 24 24" ><path d="M3,6H21V8H3V6M3,11H21V13H3V11M3,16H21V18H3V16Z" fill="#fafafa"/></svg>
<div class="abs" style="left:2566px;top:159px;width:11px;height:1154px;background:#455364"></div>
<div class="abs" style="left:1418px;top:159px;width:1148px;height:1154px;border:1px solid #41505f;border-radius:4px;box-sizing:border-box;background:#19232d"></div>
<div class="abs" style="left:2577px;top:159px;width:99px;height:1154px;border:1px solid #41505f;border-radius:4px;box-sizing:border-box;background:#19232d"></div>
<svg class="ic" style="left:1431.0px;top:364.0px" width="1123.0" height="745.0" viewBox="0 0 1123 745" preserveAspectRatio="none"><rect width="1123" height="745" fill="#fff"/><g style="filter:blur(0.70px)"><polyline points="145.3,488.5 171.3,614.7 197.3,575.6 223.4,642.6 249.4,578.5 275.4,590.9 301.4,524.4 327.4,532.1 353.5,565.4 379.5,638.9 405.5,414.4 431.5,572.7 457.5,563.8 483.6,610.9 509.6,547.2 535.6,480.8 561.6,566.9 587.6,466.4 613.7,530.5 639.7,449.0 665.7,463.4 691.7,325.0 717.7,490.1 743.8,408.3 769.8,411.0 795.8,305.2 821.8,436.0 847.8,306.4 873.9,346.3 899.9,308.4 925.9,163.3 951.9,339.7 977.9,51.4 1004.0,268.6 1030.0,157.2 1056.0,88.2" fill="none" stroke="#1f77b4" stroke-width="3.9" stroke-linejoin="round" stroke-linecap="square"/><path d="M743.8,408.3H821.8" stroke="#ff1e1e" stroke-width="4.2" stroke-linecap="square" fill="none"/><path d="M769.8,411.0H847.8" stroke="#ff1e1e" stroke-width="4.2" stroke-linecap="square" fill="none"/><path d="M795.8,305.2H873.9" stroke="#ff1e1e" stroke-width="4.2" stroke-linecap="square" fill="none"/><path d="M821.8,436.0H899.9" stroke="#ff1e1e" stroke-width="4.2" stroke-linecap="square" fill="none"/><path d="M847.8,306.4H925.9" stroke="#ff1e1e" stroke-width="4.2" stroke-linecap="square" fill="none"/><path d="M873.9,346.3H951.9" stroke="#ff1e1e" stroke-width="4.2" stroke-linecap="square" fill="none"/><path d="M899.9,308.4H977.9" stroke="#ff1e1e" stroke-width="4.2" stroke-linecap="square" fill="none"/><path d="M925.9,163.3H1004.0" stroke="#ff1e1e" stroke-width="4.2" stroke-linecap="square" fill="none"/><path d="M951.9,339.7H1030.0" stroke="#ff1e1e" stroke-width="4.2" stroke-linecap="square" fill="none"/><path d="M977.9,51.4H1056.0" stroke="#ff1e1e" stroke-width="4.2" stroke-linecap="square" fill="none"/><rect x="100.6" y="22.6" width="1003.4" height="651.6" fill="none" stroke="#222" stroke-width="2.8"/><path d="M90.1,664.9H100.6M90.1,559.8H100.6M90.1,454.8H100.6M90.1,349.7H100.6M90.1,244.6H100.6M90.1,139.5H100.6M90.1,34.4H100.6M147.3,674.2V684.7M277.4,674.2V684.7M407.5,674.2V684.7M537.6,674.2V684.7M667.7,674.2V684.7M797.8,674.2V684.7M927.9,674.2V684.7M1058.0,674.2V684.7" stroke="#222" stroke-width="2.8" fill="none"/><g font-family="DejaVu Sans,sans-serif" font-size="29.9" fill="#262626" letter-spacing="-1.4"><text x="74.1" y="674.9" text-anchor="end">100</text><text x="74.1" y="569.8" text-anchor="end">200</text><text x="74.1" y="464.8" text-anchor="end">300</text><text x="74.1" y="359.7" text-anchor="end">400</text><text x="74.1" y="254.6" text-anchor="end">500</text><text x="74.1" y="149.5" text-anchor="end">600</text><text x="74.1" y="44.4" text-anchor="end">700</text><text x="145.5" y="717.7" text-anchor="middle">0</text><text x="275.6" y="717.7" text-anchor="middle">5</text><text x="405.7" y="717.7" text-anchor="middle">10</text><text x="535.8" y="717.7" text-anchor="middle">15</text><text x="665.9" y="717.7" text-anchor="middle">20</text><text x="796.0" y="717.7" text-anchor="middle">25</text><text x="926.1" y="717.7" text-anchor="middle">30</text><text x="1056.2" y="717.7" text-anchor="middle">35</text></g></g></svg>
<div class="abs" style="left:2590px;top:164px;width:72px;height:47px;background:#1a72bb"></div>
<svg class="ic" style="left:2592.0px;top:166.0px" width="68.0" height="43.0" viewBox="0 0 1123 745" preserveAspectRatio="none"><rect width="1123" height="745" fill="#fff"/><g style="filter:blur(0.00px)"><polyline points="145.3,488.5 171.3,614.7 197.3,575.6 223.4,642.6 249.4,578.5 275.4,590.9 301.4,524.4 327.4,532.1 353.5,565.4 379.5,638.9 405.5,414.4 431.5,572.7 457.5,563.8 483.6,610.9 509.6,547.2 535.6,480.8 561.6,566.9 587.6,466.4 613.7,530.5 639.7,449.0 665.7,463.4 691.7,325.0 717.7,490.1 743.8,408.3 769.8,411.0 795.8,305.2 821.8,436.0 847.8,306.4 873.9,346.3 899.9,308.4 925.9,163.3 951.9,339.7 977.9,51.4 1004.0,268.6 1030.0,157.2 1056.0,88.2" fill="none" stroke="#1f77b4" stroke-width="9" stroke-linejoin="round" stroke-linecap="square"/><path d="M743.8,408.3H821.8" stroke="#ff1e1e" stroke-width="9" stroke-linecap="square" fill="none"/><path d="M769.8,411.0H847.8" stroke="#ff1e1e" stroke-width="9" stroke-linecap="square" fill="none"/><path d="M795.8,305.2H873.9" stroke="#ff1e1e" stroke-width="9" stroke-linecap="square" fill="none"/><path d="M821.8,436.0H899.9" stroke="#ff1e1e" stroke-width="9" stroke-linecap="square" fill="none"/><path d="M847.8,306.4H925.9" stroke="#ff1e1e" stroke-width="9" stroke-linecap="square" fill="none"/><path d="M873.9,346.3H951.9" stroke="#ff1e1e" stroke-width="9" stroke-linecap="square" fill="none"/><path d="M899.9,308.4H977.9" stroke="#ff1e1e" stroke-width="9" stroke-linecap="square" fill="none"/><path d="M925.9,163.3H1004.0" stroke="#ff1e1e" stroke-width="9" stroke-linecap="square" fill="none"/><path d="M951.9,339.7H1030.0" stroke="#ff1e1e" stroke-width="9" stroke-linecap="square" fill="none"/><path d="M977.9,51.4H1056.0" stroke="#ff1e1e" stroke-width="9" stroke-linecap="square" fill="none"/><rect x="100.6" y="22.6" width="1003.4" height="651.6" fill="none" stroke="#222" stroke-width="6"/><path d="M90.1,664.9H100.6M90.1,559.8H100.6M90.1,454.8H100.6M90.1,349.7H100.6M90.1,244.6H100.6M90.1,139.5H100.6M90.1,34.4H100.6M147.3,674.2V684.7M277.4,674.2V684.7M407.5,674.2V684.7M537.6,674.2V684.7M667.7,674.2V684.7M797.8,674.2V684.7M927.9,674.2V684.7M1058.0,674.2V684.7" stroke="#222" stroke-width="6" fill="none"/></g></svg>
<div class="abs" style="left:1936.0px;top:1317px;width:32.0px;height:17px;background:#455364;border-radius:0 0 3px 3px"></div>
<div class="abs small" style="left:1940.2px;top:1319px">Help</div>
<div class="abs" style="left:1970.0px;top:1317px;width:109.6px;height:17px;background:#455364;border-radius:0 0 3px 3px"></div>
<div class="abs small" style="left:1974.2px;top:1319px">Variable Explorer</div>
<div class="abs" style="left:2082.0px;top:1317px;width:37.0px;height:17px;background:#54687a;border-radius:0 0 3px 3px"></div>
<div class="abs" style="left:2082.0px;top:1316px;width:37.0px;height:3px;background:#259ae9"></div>
<div class="abs small" style="left:2086.2px;top:1319px">Plots</div>
<div class="abs" style="left:2121.8px;top:1317px;width:37.6px;height:17px;background:#455364;border-radius:0 0 3px 3px"></div>
<div class="abs small" style="left:2126.0px;top:1319px">Files</div>
<div class="abs" style="left:1417px;top:1335px;width:1260px;height:7px;background:#455364"></div>
<div class="abs" style="left:1417px;top:126px;width:1px;height:2388px;background:#19232d"></div>
<div class="abs" style="left:2677px;top:6px;width:1px;height:2508px;background:#0f7ad6"></div>
<svg class="ic" style="left:1423.7px;top:1358.0px" width="20" height="20" viewBox="0 0 24 24" ><path d="M21,3H3A2,2 0 0,0 1,5V19A2,2 0 0,0 3,21H21A2,2 0 0,0 23,19V5A2,2 0 0,0 21,3M21,19H3V5H13V9H21V19Z" fill="#fafafa"/></svg>
<div class="abs" style="left:1452px;top:1352px;width:108px;height:34px;background:#54687a;border-radius:4px 4px 0 0"></div>
<div class="abs" style="left:1452px;top:1383px;width:108px;height:3px;background:#259ae9"></div>
<div class="abs small" style="left:1461.5px;top:1362px">Console 1/A</div>
<svg class="ic" style="left:1535.0px;top:1360.8px" width="16" height="16" viewBox="-8 -8 16 16"><path d="M-7,-7L7,7M7,-7L-7,7" stroke="#e0e1e3" stroke-width="1.6" fill="none"/></svg>
<svg class="ic" style="left:2578.0px;top:1358.0px" width="20" height="20" viewBox="0 0 24 24" ><path d="M5.8,5.8H18.2V18.2H5.8Z" fill="#9e9e9e"/></svg>
<svg class="ic" style="left:2611.5px;top:1355.5px" width="24" height="24" viewBox="0 0 24 24" ><path d="M19,4H15.5L14.5,3H9.5L8.5,4H5V6H19M6,19A2,2 0 0,0 8,21H16A2,2 0 0,0 18,19V7H6V19Z" fill="#fafafa"/><path d="M20,8V22H9" stroke="#fafafa" stroke-width="1.4" fill="none"/></svg>
<svg class="ic" style="left:2648.8px;top:1358.0px" width="20" height="20" viewBox="0 0 24 24" ><path d="M3,6H21V8H3V6M3,11H21V13H3V11M3,16H21V18H3V16Z" fill="#fafafa"/></svg>
<div class="abs" style="left:1418px;top:1386px;width:1258px;height:1118px;border:1px solid #41505f;border-radius:4px;box-sizing:border-box"></div>
<svg class="ic" style="left:2660px;top:1396px" width="10" height="6" viewBox="0 0 10 6"><path d="M0,6L5,0.5L10,6Z" fill="#4d5b6a"/></svg>
<div class="abs" style="left:2659px;top:1407px;width:12px;height:1078px;border:1px solid #455364;border-radius:4px;box-sizing:border-box"></div>
<div class="abs" style="left:2659px;top:2013px;width:12px;height:236px;background:#60798b;border:2px solid #455364;border-radius:5px;box-sizing:border-box"></div>
<svg class="ic" style="left:2660px;top:2488px" width="10" height="6" viewBox="0 0 10 6"><path d="M0,0L5,5.5L10,0Z" fill="#4d5b6a"/></svg>
<div class="abs" style="left:1488px;top:1437px;width:1106px;height:41px;background:#d04a02;border:1px solid #6b7780;border-bottom:none;box-sizing:border-box"></div>
<div class="abs" style="left:1488px;top:1477px;width:1106px;height:64px;border:1px solid #6b7780;box-sizing:border-box"></div>

<div class="cl mono" style="top:1446px;left:1488.0px;width:1106px;text-align:center;"><b>Warning</b></div>
<div class="cl mono" style="top:1486px;left:1497.6px;">Figures now render in the Plots pane by default. To make them also appear inline in the Console,</div>
<div class="cl mono" style="top:1509px;left:1497.6px;">uncheck "Mute Inline Plotting" under the Plots pane options menu.</div>
<div class="cl mono" style="top:1587px;"><span class="cg">In [<b>2</b>]:</span> runfile(<span class="cs">'D:/LSTM-master/LSTM-master/LSTM<span class="z">系列</span>/Multi-Step LSTM<span class="z">预测</span>2/<span class="z">多步预测的</span>LSTM<span class="z">网络</span>.py'</span>, wdir=<span class="cs">'D:/LSTM-</span></div>
<div class="cl mono" style="top:1613px;"><span class="cs">master/LSTM-master/LSTM<span class="z">系列</span>/Multi-Step LSTM<span class="z">预测</span>2'</span>)</div>
<div class="cl mono" style="top:1639px;">D:\LSTM-master\LSTM-master\LSTM<span class="z">系列</span>\Multi-Step LSTM<span class="z">预测</span>2\<span class="z">多步预测的</span>LSTM<span class="z">网络</span>.py:5: FutureWarning: The</div>
<div class="cl mono" style="top:1665px;">pandas.datetime class is deprecated and will be removed from pandas in a future version. Import from datetime</div>
<div class="cl mono" style="top:1691px;">module instead.</div>
<div class="cl mono" style="top:1717px;">  from pandas import datetime</div>
<div class="cl mono" style="top:1740px;">Traceback <span class="cc">(most recent call last)</span>:</div>
<div class="cl mono" style="top:1786px;">  <span class="cc">File</span> <span class="cg">D:\LSTM-master\LSTM-master\LSTM<span class="z">系列</span>\Multi-Step LSTM<span class="z">预测</span>2\<span class="z">多步预测的</span>LSTM<span class="z">网络</span>.py:8</span> <span class="cc">in</span> <span class="cm">&lt;module&gt;</span></div>
<div class="cl mono" style="top:1812px;"><span class="cy">    from keras.models import Sequential</span></div>
<div class="cl mono" style="top:1858px;"><span class="cr">ModuleNotFoundError:</span> No module named 'keras'</div>
<div class="cl mono" style="top:1927px;"><span class="cg">In [<b>3</b>]:</span> runfile(<span class="cs">'D:/LSTM-master/LSTM-master/LSTM<span class="z">系列</span>/Multi-Step LSTM<span class="z">预测</span>2/<span class="z">多步预测的</span>LSTM<span class="z">网络</span>.py'</span>, wdir=<span class="cs">'D:/LSTM-</span></div>
<div class="cl mono" style="top:1953px;"><span class="cs">master/LSTM-master/LSTM<span class="z">系列</span>/Multi-Step LSTM<span class="z">预测</span>2'</span>)</div>
<div class="cl mono" style="top:1979px;">D:\LSTM-master\LSTM-master\LSTM<span class="z">系列</span>\Multi-Step LSTM<span class="z">预测</span>2\<span class="z">多步预测的</span>LSTM<span class="z">网络</span>.py:5: FutureWarning: The</div>
<div class="cl mono" style="top:2005px;">pandas.datetime class is deprecated and will be removed from pandas in a future version. Import from datetime</div>
<div class="cl mono" style="top:2031px;">module instead.</div>
<div class="cl mono" style="top:2057px;">  from pandas import datetime</div>
<div class="cl mono" style="top:2080px;">Traceback <span class="cc">(most recent call last)</span>:</div>
<div class="cl mono" style="top:2126px;">  File <span class="cdg">D:\LSTM-master\LSTM-master\LSTM<span class="z">系列</span>\Multi-Step LSTM<span class="z">预测</span>2\<span class="z">多步预测的</span>LSTM<span class="z">网络</span>.py:8</span> in <span class="cdm">&lt;module&gt;</span></div>
<div class="cl mono" style="top:2152px;">    from keras.models import Sequential</div>
<div class="cl mono" style="top:2198px;">  File <span class="cdg">~\anaconda3\lib\site-packages\keras\__init__.py:20</span> in <span class="cdm">&lt;module&gt;</span></div>
<div class="cl mono" style="top:2221px;">    from keras import distribute</div>
<div class="cl mono" style="top:2267px;">  File <span class="cdg">~\anaconda3\lib\site-packages\keras\distribute\__init__.py:18</span> in <span class="cdm">&lt;module&gt;</span></div>
<div class="cl mono" style="top:2290px;">    from keras.distribute import sidecar_evaluator</div>
<div class="cl mono" style="top:2336px;">  <span class="cc">File</span> <span class="cg">~\anaconda3\lib\site-packages\keras\distribute\sidecar_evaluator.py:17</span> <span class="cc">in</span> <span class="cm">&lt;module&gt;</span></div>
<div class="cl mono" style="top:2359px;"><span class="cy">    import tensorflow.compat.v2 as tf</span></div>
<div class="cl mono" style="top:2405px;"><span class="cr">ModuleNotFoundError:</span> No module named 'tensorflow'</div>
<div class="cl mono" style="top:2474px;"><span class="cg">In [<b>4</b>]:</span> </div>
<div class="abs" style="left:1973px;top:2505px;width:98px;height:12px;background:#54687a"></div>
<div class="abs" style="left:1973px;top:2505px;width:98px;height:3px;background:#259ae9"></div>
<div class="abs small" style="left:1977px;top:2509px">IPython console</div>
<div class="abs" style="left:2073px;top:2507px;width:50px;height:10px;background:#455364"></div>
<div class="abs small" style="left:2077px;top:2509px">History</div>
</div></div></body></html>
